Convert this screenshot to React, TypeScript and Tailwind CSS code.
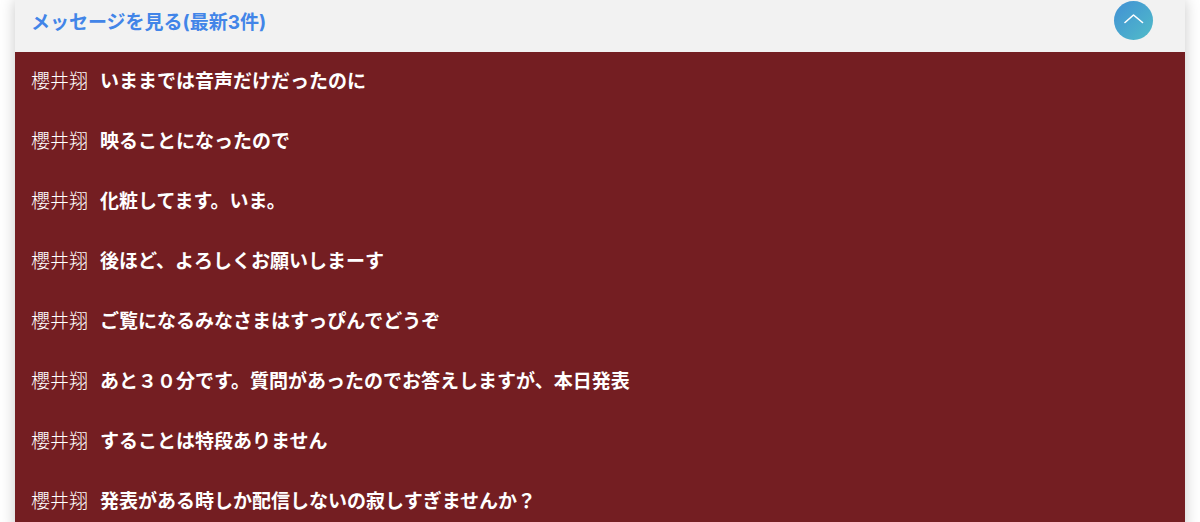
import React, { useState } from 'react';

interface Message {
  name: string;
  text: string;
}

const messages: Message[] = [
  { name: '櫻井翔', text: 'いままでは音声だけだったのに' },
  { name: '櫻井翔', text: '映ることになったので' },
  { name: '櫻井翔', text: '化粧してます。いま。' },
  { name: '櫻井翔', text: '後ほど、よろしくお願いしまーす' },
  { name: '櫻井翔', text: 'ご覧になるみなさまはすっぴんでどうぞ' },
  { name: '櫻井翔', text: 'あと３０分です。質問があったのでお答えしますが、本日発表' },
  { name: '櫻井翔', text: 'することは特段ありません' },
  { name: '櫻井翔', text: '発表がある時しか配信しないの寂しすぎませんか？' },
];

const MessageRow: React.FC<Message> = ({ name, text }) => (
  <li className="flex h-[60px] items-center gap-3 px-4 text-[19px] leading-7 text-white">
    <span className="shrink-0 font-light">{name}</span>
    <span className="font-bold">{text}</span>
  </li>
);

const App: React.FC = () => {
  const [open, setOpen] = useState(true);

  return (
    <div className="min-h-screen overflow-hidden bg-white px-[15px] font-['Inter','Noto_Sans_CJK_JP',sans-serif]" lang="ja">
      <section className="min-h-screen bg-[#741e22] shadow-[0_0_14px_rgba(0,0,0,0.22)]">
        <header className="flex items-center justify-between bg-[#f2f2f2] pt-px pr-8 pb-3 pl-4">
          <h2 className="pt-1 text-[19px] leading-7 font-bold text-[#4285e8]">メッセージを見る(最新3件)</h2>
          <button
            type="button"
            aria-label="メッセージの開閉"
            aria-expanded={open}
            onClick={() => setOpen(!open)}
            className="flex size-[39px] items-center justify-center rounded-full bg-linear-to-br from-[#4290d4] to-[#52bcc8]"
          >
            <svg
              viewBox="0 0 20 10"
              className={open ? 'mb-1 h-[10px] w-5' : 'mb-1 h-[10px] w-5 rotate-180'}
              fill="none"
              stroke="white"
              strokeWidth="1.6"
              strokeLinecap="round"
              strokeLinejoin="round"
            >
              <path d="M1 8.5 9.5 1 18.5 8.5" />
            </svg>
          </button>
        </header>
        {open && (
          <ul>
            {messages.map((m, i) => (
              <MessageRow key={i} name={m.name} text={m.text} />
            ))}
          </ul>
        )}
      </section>
    </div>
  );
};

export default App;
